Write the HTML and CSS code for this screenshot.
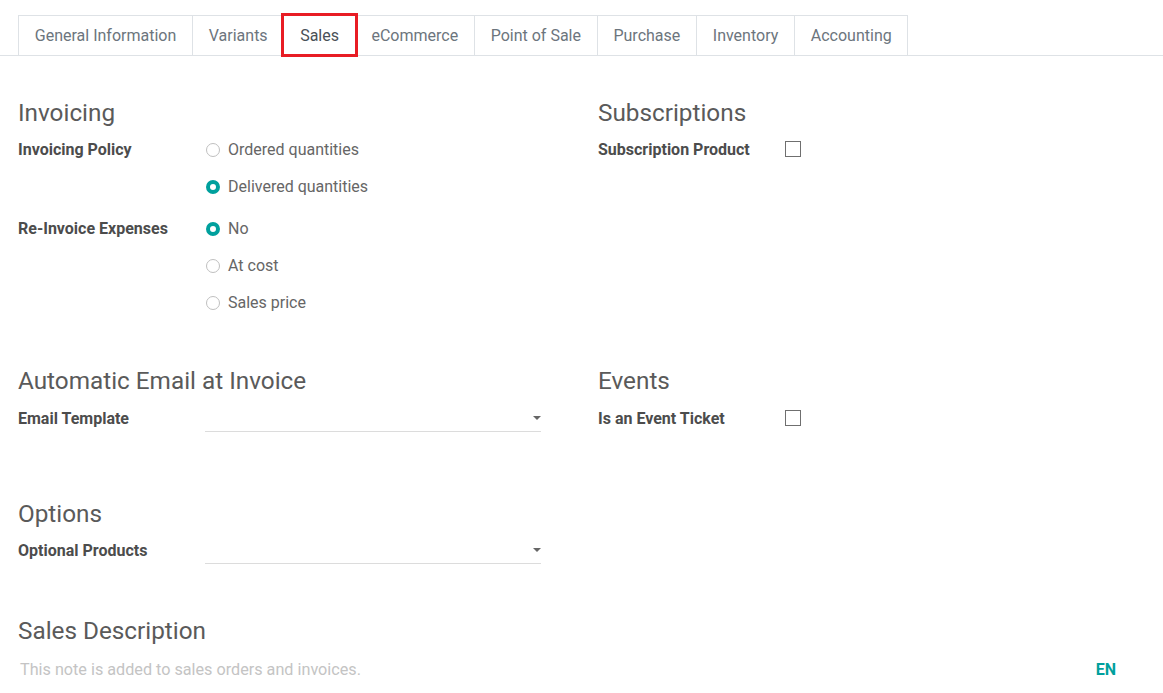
FILE: index.html
```html
<!DOCTYPE html>
<html>
<head>
<meta charset="utf-8">
<link rel="stylesheet" href="styles.css">
</head>
<body>
<div class="tabs">
  <div class="tab">General Information</div>
  <div class="tab">Variants</div>
  <div class="tab active">Sales</div>
  <div class="tab">eCommerce</div>
  <div class="tab">Point of Sale</div>
  <div class="tab">Purchase</div>
  <div class="tab">Inventory</div>
  <div class="tab">Accounting</div>
</div>

<div class="sheet">
  <div class="grid">
    <section class="group">
      <h2>Invoicing</h2>
      <div class="field">
        <div class="label">Invoicing Policy</div>
        <div class="radios">
          <div class="radio"><span class="dot"></span>Ordered quantities</div>
          <div class="radio"><span class="dot on"></span>Delivered quantities</div>
        </div>
      </div>
      <div class="field">
        <div class="label">Re-Invoice Expenses</div>
        <div class="radios">
          <div class="radio"><span class="dot on"></span>No</div>
          <div class="radio"><span class="dot"></span>At cost</div>
          <div class="radio"><span class="dot"></span>Sales price</div>
        </div>
      </div>
    </section>
    <section class="group">
      <h2>Subscriptions</h2>
      <div class="field">
        <div class="label">Subscription Product</div>
        <div class="check-cell"><span class="check"></span></div>
      </div>
    </section>

    <section class="group second">
      <h2>Automatic Email at Invoice</h2>
      <div class="field">
        <div class="label">Email Template</div>
        <div class="select"><span class="caret"></span></div>
      </div>
    </section>
    <section class="group second">
      <h2>Events</h2>
      <div class="field">
        <div class="label">Is an Event Ticket</div>
        <div class="check-cell"><span class="check"></span></div>
      </div>
    </section>

    <section class="group options">
      <h2>Options</h2>
      <div class="field">
        <div class="label">Optional Products</div>
        <div class="select"><span class="caret"></span></div>
      </div>
    </section>
    <section class="group options"></section>
  </div>

  <section class="desc">
    <h2>Sales Description</h2>
    <div class="desc-row">
      <div class="placeholder">This note is added to sales orders and invoices.</div>
      <div class="lang">EN</div>
    </div>
  </section>
</div>
</body>
</html>
```

FILE: styles.css
```css
html, body {
  margin: 0;
  padding: 0;
  background: #ffffff;
  font-family: Roboto, "Liberation Sans", sans-serif;
  color: #4c4c4c;
}

.tabs {
  display: flex;
  margin-top: 15px;
  padding-left: 18px;
  border-bottom: 1px solid #dee2e6;
  height: 40px;
}

.tab {
  height: 40px;
  box-sizing: border-box;
  padding: 0 15.75px;
  border: 1px solid #dee2e6;
  border-bottom: none;
  margin-right: -1px;
  display: flex;
  align-items: center;
  font-size: 16px;
  color: #6c757d;
  background: #fff;
}

.tab.active {
  color: #495057;
  outline: 3px solid #e81c24;
  outline-offset: -1px;
  position: relative;
  z-index: 1;
}

.sheet {
  padding: 0 18px;
}

.grid {
  display: grid;
  grid-template-columns: 580px 1fr;
}

h2 {
  margin: 0;
  font-size: 24.3px;
  font-weight: 400;
  line-height: 30px;
  color: #5a5a5a;
}

.group {
  padding-top: 42px;
}

.group.second {
  padding-top: 45px;
}

.group.second .field {
  margin-top: 4px;
}

.group.options {
  padding-top: 62px;
}

.field {
  display: grid;
  grid-template-columns: 187px 1fr;
  margin-top: 3px;
}

.field + .field {
  margin-top: 5px;
}

.label {
  font-size: 16px;
  font-weight: 700;
  line-height: 37px;
  color: #4c4c4c;
}

.radio {
  height: 37px;
  display: flex;
  align-items: center;
  font-size: 16px;
  color: #666;
}

.dot {
  width: 14px;
  height: 14px;
  box-sizing: border-box;
  border: 1px solid #bfbfbf;
  border-radius: 50%;
  margin: 0 8px 0 1px;
  flex: none;
}

.dot.on {
  border: 4.5px solid #00a09d;
  background: #fff;
}

.check-cell {
  height: 37px;
  display: flex;
  align-items: center;
}

.check {
  width: 16px;
  height: 16px;
  box-sizing: border-box;
  border: 1.5px solid #6f6f6f;
  margin-top: -2px;
}

.select {
  width: 336px;
  height: 32px;
  border-bottom: 1px solid #dcdcdc;
  display: flex;
  align-items: center;
  justify-content: flex-end;
  box-sizing: border-box;
  padding-bottom: 1px;
}

.caret {
  width: 0;
  height: 0;
  border-left: 4px solid transparent;
  border-right: 4px solid transparent;
  border-top: 4px solid #666;
  margin-top: 6px;
}

.desc {
  padding-top: 47px;
}

.desc-row {
  display: flex;
  justify-content: space-between;
  align-items: center;
  margin-top: 14px;
}

.placeholder {
  font-size: 16.2px;
  color: #c4c4c4;
  padding-left: 2px;
}

.lang {
  font-size: 16px;
  font-weight: 700;
  color: #00a09d;
  margin-right: 29px;
  margin-top: -1px;
}
```
